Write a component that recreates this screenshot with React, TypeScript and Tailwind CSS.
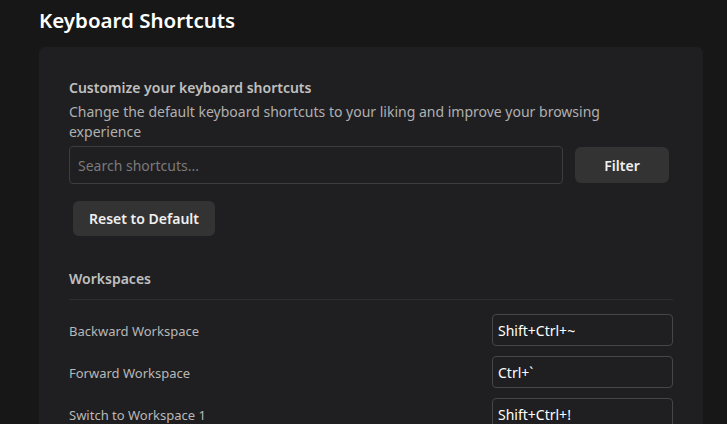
import React from "react";

const rows = [
  { label: "Backward Workspace", keys: "Shift+Ctrl+~" },
  { label: "Forward Workspace", keys: "Ctrl+`" },
  { label: "Switch to Workspace 1", keys: "Shift+Ctrl+!" },
  { label: "Switch to Workspace 2", keys: "Shift+Ctrl+@" },
];

const App = () => {
  return (
    <div
      className="h-[424px] overflow-hidden bg-[#171717] text-[#bdbdbd]"
      style={{ fontFamily: '"Noto Sans", "Open Sans", sans-serif' }}
    >
      <div className="pl-[39px] pr-[24px]">
        <h1 className="text-[20.5px] font-semibold text-white leading-[28px] pt-[6px] mb-[13px]">
          Keyboard Shortcuts
        </h1>

        <div className="bg-[#1f1f21] rounded-[6px] px-[30px] pt-[31px] pb-6">
          <h2 className="text-[14px] font-semibold text-[#c0c0c0] leading-[20px]">
            Customize your keyboard shortcuts
          </h2>
          <p className="text-[14px] text-[#b0b0b0] leading-[20px] mt-[4px]">
            Change the default keyboard shortcuts to your liking and improve your browsing
            experience
          </p>

          <div className="flex items-center gap-3 mt-[4px]">
            <input
              className="flex-1 h-[38px] rounded-[4px] border border-[#3c3c42] bg-[#1f1f21] px-[8px] text-[14px] text-white placeholder:text-[#7a7a7a] outline-none"
              placeholder="Search shortcuts..."
            />
            <button className="w-[94px] h-[36px] rounded-[6px] bg-[#333333] text-[14px] font-semibold text-[#f0f0f0] mr-[4px]">
              Filter
            </button>
          </div>

          <button className="mt-[17px] ml-[4px] h-[35px] px-4 rounded-[6px] bg-[#333333] text-[14px] font-semibold text-[#f0f0f0]">
            Reset to Default
          </button>

          <h3 className="mt-[33px] text-[14px] font-semibold text-[#c0c0c0] leading-[20px]">
            Workspaces
          </h3>
          <div className="border-b border-[#2e2e30] mt-[10px] mb-[14px]" />

          <div className="flex flex-col gap-[10px]">
            {rows.map((r) => (
              <div key={r.label} className="flex items-center justify-between">
                <span className="text-[13px] text-[#b8b8b8] pt-[3px]">{r.label}</span>
                <div className="w-[181px] h-[32px] rounded-[4px] border border-[#464648] flex items-center px-[5px] text-[14px] text-white">
                  {r.keys}
                </div>
              </div>
            ))}
          </div>
        </div>
      </div>
    </div>
  );
};

export default App;
